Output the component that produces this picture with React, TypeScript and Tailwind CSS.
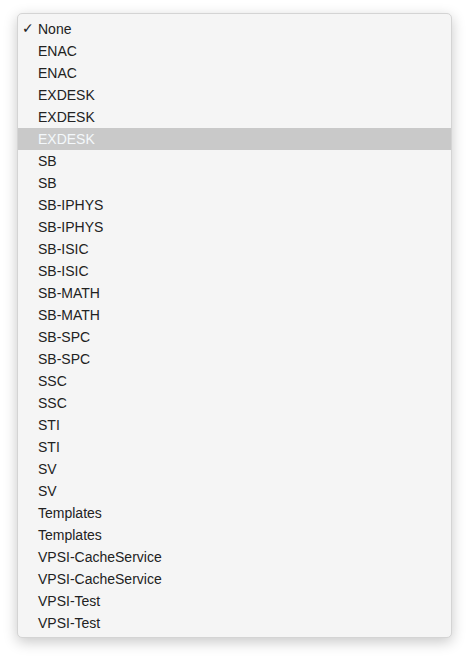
const items = [
  'None',
  'ENAC',
  'ENAC',
  'EXDESK',
  'EXDESK',
  'EXDESK',
  'SB',
  'SB',
  'SB-IPHYS',
  'SB-IPHYS',
  'SB-ISIC',
  'SB-ISIC',
  'SB-MATH',
  'SB-MATH',
  'SB-SPC',
  'SB-SPC',
  'SSC',
  'SSC',
  'STI',
  'STI',
  'SV',
  'SV',
  'Templates',
  'Templates',
  'VPSI-CacheService',
  'VPSI-CacheService',
  'VPSI-Test',
  'VPSI-Test',
];

export default function App() {
  const selected = 0;
  const highlighted = 5;

  return (
    <div className="min-h-[658px] bg-white pl-[17px] pt-[13px] font-['Liberation_Sans',Arial,sans-serif]">
      <ul className="w-[435px] rounded-[5px] border border-[#d4d4d4] bg-[#f5f5f5] pt-[4px] pb-[3px] shadow-[0_4px_14px_rgba(0,0,0,0.22)]">
        {items.map((label, i) => (
          <li
            key={i}
            className={
              'relative flex h-[22px] items-center pl-[20px] text-[14px] leading-none ' +
              (i === highlighted ? 'bg-[#c9c9c9] text-[#f4f8fb]' : 'text-[#222222]')
            }
          >
            {i === selected && (
              <span className="absolute left-[4px] top-[3px] font-['DejaVu_Sans',sans-serif] text-[14px] font-bold text-[#222222]">
                ✓
              </span>
            )}
            {label}
          </li>
        ))}
      </ul>
    </div>
  );
}
